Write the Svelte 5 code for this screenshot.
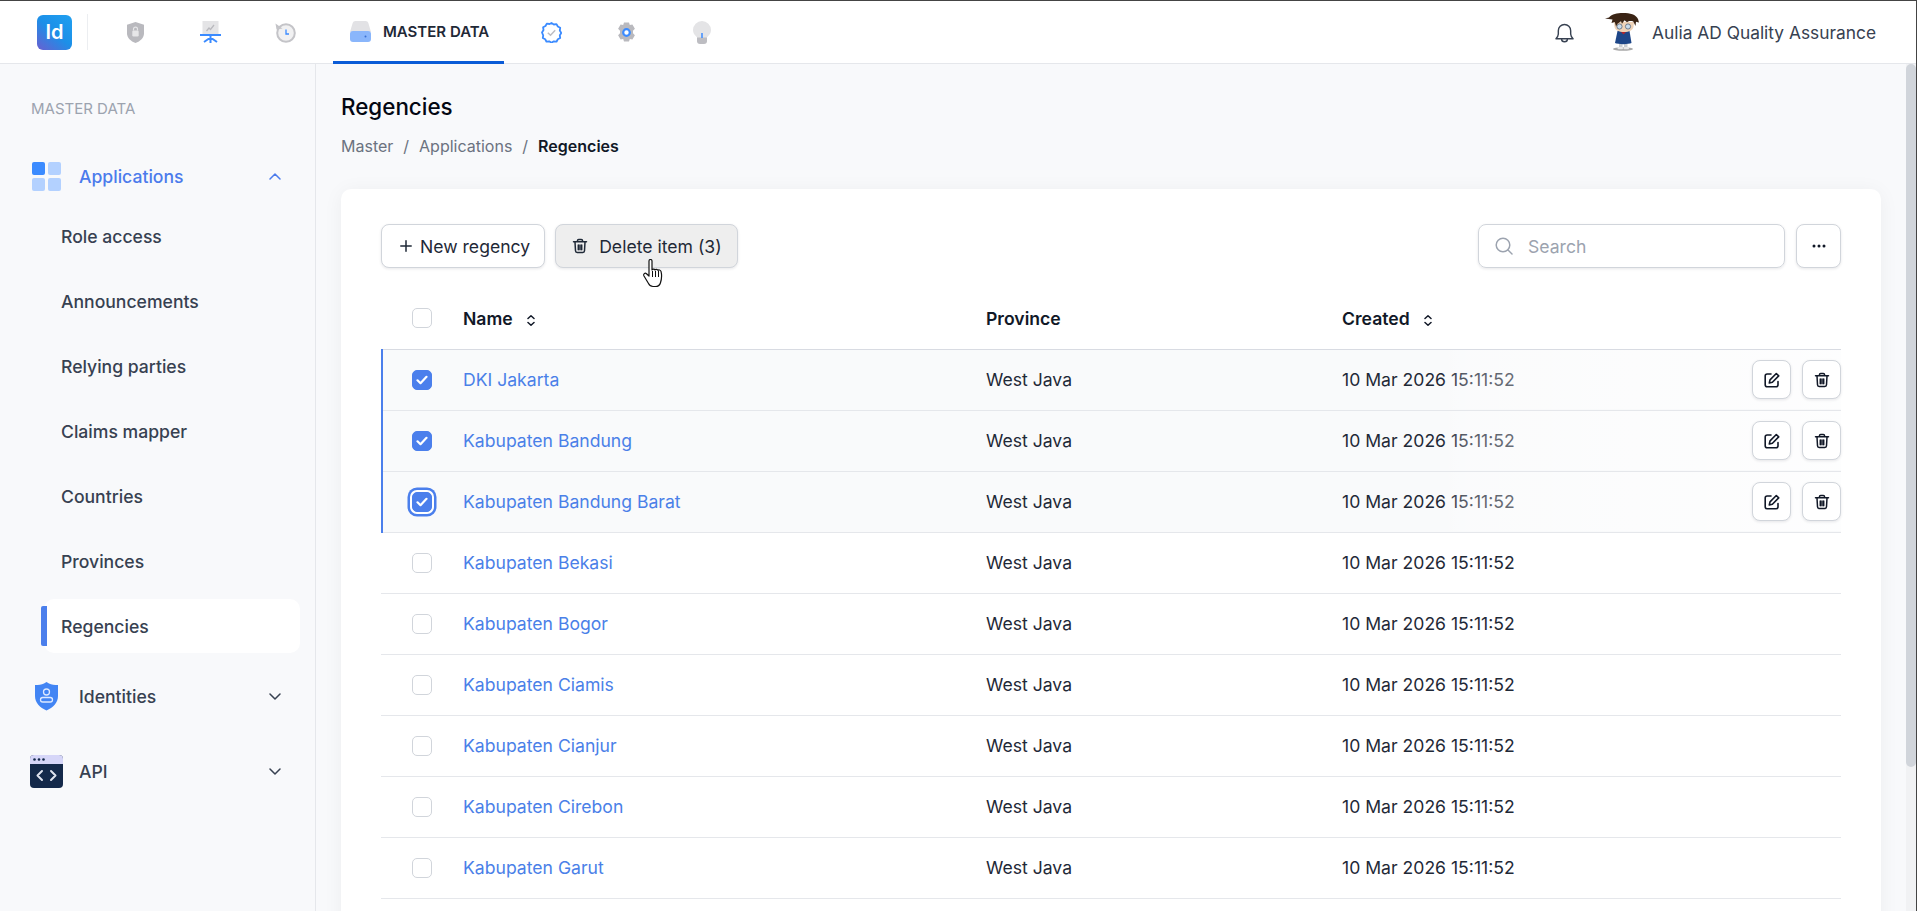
<script lang="ts">
  const subItems = ['Role access', 'Announcements', 'Relying parties', 'Claims mapper', 'Countries', 'Provinces', 'Regencies'];
  const regencies = [
    { name: 'DKI Jakarta', selected: true },
    { name: 'Kabupaten Bandung', selected: true },
    { name: 'Kabupaten Bandung Barat', selected: true, focus: true },
    { name: 'Kabupaten Bekasi' },
    { name: 'Kabupaten Bogor' },
    { name: 'Kabupaten Ciamis' },
    { name: 'Kabupaten Cianjur' },
    { name: 'Kabupaten Cirebon' },
    { name: 'Kabupaten Garut' }
  ];
</script>

{#snippet trash(size)}
  <svg width={size} height={size} viewBox="0 0 16 16" fill="none" stroke="currentColor" stroke-width="1.5" stroke-linecap="round" stroke-linejoin="round">
    <path d="M1.500 3.800h13M5.500 3.500V2.600c0-.7.5-1.200 1.200-1.200h2.600c.7 0 1.200.5 1.200 1.200v.9M3 4l.5 8.800c0 1 .7 1.700 1.700 1.700h5.600c1 0 1.700-.7 1.700-1.700L13 4M6.300 7v4.800M8 7v4.800M9.700 7v4.800" />
  </svg>
{/snippet}

{#snippet sortIcon()}
  <svg class="sort" width="8" height="11" viewBox="0 0 8 11" fill="none" stroke="currentColor" stroke-width="1.500" stroke-linecap="round" stroke-linejoin="round">
    <path d="M1 3.500l3-2.700 3 2.700M1 7.500l3 2.700 3-2.700" />
  </svg>
{/snippet}

{#snippet checkmark()}
  <svg width="12" height="10" viewBox="0 0 12 10" fill="none" stroke="#fff" stroke-width="2.200" stroke-linecap="round" stroke-linejoin="round">
    <path d="M1.500 5.300l3 2.900 6-6.400" />
  </svg>
{/snippet}

<div class="window">
  <header class="topbar">
    <div class="logo">Id</div>
    <span class="logo-divider"></span>
    <nav class="tabs">
      <a class="tab icon-only" href="#security" aria-label="Security">
        <svg width="17" height="21" viewBox="0 0 17 21">
          <path d="M8.500 0L17 2.800v8.400c0 4.600-3.700 8-8.500 9.800C3.700 19.200 0 15.800 0 11.200V2.800z" fill="#b9b9be" />
          <rect x="5.300" y="8.500" width="6.400" height="6" rx="1.200" fill="#e6e6e8" />
          <path d="M6.500 8.600V7.200a2 2 0 0 1 4 0v1.400" fill="none" stroke="#e6e6e8" stroke-width="1.200" />
        </svg>
      </a>
      <a class="tab icon-only" href="#report" aria-label="Reports">
        <svg width="21" height="22" viewBox="0 0 21 22">
          <rect x="2.500" y="0" width="16" height="13" fill="#e4e4e6" />
          <path d="M6.500 10l2.500-3 1.500 1.500L14 4" fill="none" stroke="#b9b9be" stroke-width="1.300" />
          <rect x="0" y="13" width="21" height="2" fill="#3b8bff" />
          <path d="M10.500 15v7M10.500 16.500L4 21M10.500 16.500L17 21" fill="none" stroke="#3b8bff" stroke-width="2" />
        </svg>
      </a>
      <a class="tab icon-only" href="#history" aria-label="History">
        <svg width="21" height="21" viewBox="0 0 21 21">
          <circle cx="11" cy="11" r="8.800" fill="#f1f1f2" stroke="#c4c4c8" stroke-width="2" />
          <path d="M0.500 1.500l1 6 6-1z" fill="#c4c4c8" />
          <path d="M11 7.500V12h3" fill="none" stroke="#3b8bff" stroke-width="1.300" />
        </svg>
      </a>
      <a class="tab active" href="#master">
        <svg width="21" height="21" viewBox="0 0 21 21">
          <path d="M0 11L2.500 2.500C3 .8 4 0 5.500 0h10c1.500 0 2.500.8 3 2.500L21 11z" fill="#e2e2e5" />
          <rect x="0" y="10" width="21" height="11" rx="3" fill="#8ab6fb" />
          <circle cx="15.500" cy="15.500" r="1" fill="#3b6fd0" />
        </svg>
        <span>MASTER DATA</span>
      </a>
      <a class="tab icon-only" href="#verified" aria-label="Verified">
        <svg width="21" height="21" viewBox="0 0 21 21">
          <path d="M10.500 1l2.300 1.500 2.700-.4 1.300 2.400 2.400 1.300-.4 2.700 1.500 2.500-1.500 2.300.4 2.700-2.400 1.300-1.300 2.400-2.700-.4-2.300 1.500-2.300-1.500-2.700.4-1.300-2.400-2.400-1.300.4-2.700L1 10.500l1.500-2.500-.4-2.700 2.400-1.300 1.300-2.400 2.700.4z" fill="none" stroke="#3b8bff" stroke-width="1.800" stroke-linejoin="round" />
          <path d="M6.800 10.800l2.700 2.500 4.700-5" fill="none" stroke="#bdbdc2" stroke-width="1.500" />
        </svg>
      </a>
      <a class="tab icon-only" href="#settings" aria-label="Settings">
        <svg width="21" height="21" viewBox="0 0 21 21">
          <path d="M8 .5h5l.8 2.600 2.600-.7 2.500 4.300-1.900 2 0 2.600 1.900 2-2.500 4.300-2.600-.7-.8 2.600H8l-.8-2.600-2.600.7-2.500-4.300 1.900-2 0-2.600-1.900-2 2.500-4.300 2.600.7z" fill="#b9b9be" />
          <circle cx="10.500" cy="10.500" r="3.300" fill="#fff" stroke="#3b8bff" stroke-width="2.200" />
        </svg>
      </a>
      <a class="tab icon-only" href="#ideas" aria-label="Ideas">
        <svg width="18" height="23" viewBox="0 0 18 23">
          <path d="M9 0a9 9 0 0 1 9 9c0 3-1.500 4.700-3 6.300L13.500 17h-9L3 15.300C1.500 13.700 0 12 0 9a9 9 0 0 1 9-9z" fill="#e4e4e6" />
          <path d="M4 16.500h10V20a3 3 0 0 1-3 3H7a3 3 0 0 1-3-3z" fill="#bdbdc2" />
          <path d="M9 12v5" stroke="#3b8bff" stroke-width="1.500" />
        </svg>
      </a>
    </nav>
    <div class="account">
      <svg class="bell" width="19" height="20" viewBox="0 0 20 21" fill="none" stroke="#374151" stroke-width="1.500" stroke-linecap="round" stroke-linejoin="round">
        <path d="M1 16.500c1.400-1.200 2.300-2.500 2.500-5V8a6.500 6.500 0 0 1 13 0v3.500c.2 2.500 1.100 3.800 2.500 5z" />
        <path d="M7 17c0 3.500 6 3.500 6 0" />
      </svg>
      <svg class="avatar" width="34" height="38" viewBox="0 0 34 38">
        <ellipse cx="18" cy="36" rx="10" ry="1.800" fill="#a9a9a9" />
        <rect x="14" y="30" width="3.500" height="5" fill="#c9cdd2" />
        <rect x="19" y="30" width="3.500" height="5" fill="#c9cdd2" />
        <rect x="12.500" y="34" width="5.500" height="2.200" rx="1" fill="#e8e8e8" />
        <rect x="18.500" y="34" width="5.500" height="2.200" rx="1" fill="#e8e8e8" />
        <path d="M12.500 18h12l2 12c-3 1.500-13.500 1.500-16.500 0z" fill="#1d4688" />
        <path d="M15.500 18.500h6l-3 3z" fill="#b0262a" />
        <path d="M9 9h20l-.5 5c-1 3.500-4 5-9.500 5s-8.500-1.500-9.500-5z" fill="#efd3b8" />
        <circle cx="14.500" cy="13.500" r="2.600" fill="#c9dcec" stroke="#56657a" stroke-width=".8" />
        <circle cx="23" cy="13.500" r="2.600" fill="#c9dcec" stroke="#56657a" stroke-width=".8" />
        <path d="M0 5.500l4-1C7 1 12 0 18 0c7 0 13 1.500 15 6l1 3.500-3-.8-.5 4.300-2.200-4.500c-2.300-.8-4.800-.4-6.300.8l-2.500-2-2.500 3.500-1-2.500-3.500 2.500-1.500 2.700-1.200-4.500-3.300 1 1-3.500z" fill="#3a2415" />
      </svg>
      <span class="user-name">Aulia AD Quality Assurance</span>
    </div>
  </header>

  <div class="body">
    <aside class="sidebar">
      <div class="side-title">MASTER DATA</div>

      <div class="group open">
        <svg class="apps-icon" width="29" height="29" viewBox="0 0 29 29">
          <rect width="13" height="13" rx="2" fill="#3b8bff" />
          <rect x="16" width="13" height="13" rx="2" fill="#b3d1ff" />
          <rect y="16" width="13" height="13" rx="2" fill="#b3d1ff" />
          <rect x="16" y="16" width="13" height="13" rx="2" fill="#b3d1ff" />
        </svg>
        <span class="group-label">Applications</span>
        <svg width="12" height="7" viewBox="0 0 12 7" fill="none" stroke="currentColor" stroke-width="1.500" stroke-linecap="round" stroke-linejoin="round"><path d="M1 6l5-5 5 5" /></svg>
      </div>
      <ul class="sub">
        {#each subItems as item}
          <li class:current={item === 'Regencies'}>{item}</li>
        {/each}
      </ul>

      <div class="group identities">
        <svg class="identity-icon" width="23" height="29" viewBox="0 0 23 29">
          <path d="M11.500 0L14 1.500c2.500 1 5.500 1.500 9 1.500v11c0 7-5 11.500-11.500 14.500C5 25.500 0 21 0 14V3c3.500 0 6.500-.5 9-1.500z" fill="#4285f4" />
          <circle cx="11.500" cy="10" r="3" fill="none" stroke="#dce9ff" stroke-width="1.300" />
          <rect x="5.500" y="15.500" width="12" height="4.500" rx="2.200" fill="none" stroke="#dce9ff" stroke-width="1.300" />
        </svg>
        <span class="group-label">Identities</span>
        <svg width="12" height="7" viewBox="0 0 12 7" fill="none" stroke="currentColor" stroke-width="1.500" stroke-linecap="round" stroke-linejoin="round"><path d="M1 1l5 5 5-5" /></svg>
      </div>

      <div class="group api">
        <svg width="33" height="33" viewBox="0 0 33 33">
          <rect width="33" height="33" rx="4" fill="#14294a" />
          <path d="M0 9V4a4 4 0 0 1 4-4h25a4 4 0 0 1 4 4v5z" fill="#d6d6f8" />
          <circle cx="4.500" cy="4.500" r="1.300" fill="#14294a" />
          <circle cx="9" cy="4.500" r="1.300" fill="#14294a" />
          <circle cx="13.500" cy="4.500" r="1.300" fill="#14294a" />
          <path d="M12 16l-4.500 4.500 4.500 4.500M21 16l4.500 4.500L21 25" fill="none" stroke="#dfe3ee" stroke-width="2" stroke-linecap="round" stroke-linejoin="round" />
        </svg>
        <span class="group-label">API</span>
        <svg width="12" height="7" viewBox="0 0 12 7" fill="none" stroke="currentColor" stroke-width="1.500" stroke-linecap="round" stroke-linejoin="round"><path d="M1 1l5 5 5-5" /></svg>
      </div>
    </aside>

    <main class="content">
      <h1>Regencies</h1>
      <div class="crumbs">
        <span>Master</span><i>/</i><span>Applications</span><i>/</i><b>Regencies</b>
      </div>

      <section class="card">
        <div class="toolbar">
          <button class="btn">
            <svg width="12" height="12" viewBox="0 0 12 12" fill="none" stroke="currentColor" stroke-width="1.500" stroke-linecap="round"><path d="M6 .8v10.400M.8 6h10.400" /></svg>
            New regency
          </button>
          <button class="btn hovered">
            {@render trash(16)}
            Delete item (3)
          </button>
          <div class="spacer"></div>
          <label class="search">
            <svg width="18" height="18" viewBox="0 0 18 18" fill="none" stroke="#9ca3af" stroke-width="1.500" stroke-linecap="round"><circle cx="8" cy="8" r="6.800" /><path d="M13 13l4 4" /></svg>
            <input placeholder="Search" />
          </label>
          <button class="btn more" aria-label="More">
            <svg width="14" height="4" viewBox="0 0 14 4" fill="#111827"><circle cx="2" cy="2" r="1.500" /><circle cx="7" cy="2" r="1.500" /><circle cx="12" cy="2" r="1.500" /></svg>
          </button>
        </div>

        <div class="thead">
          <span class="c-check"><span class="box"></span></span>
          <span>Name {@render sortIcon()}</span>
          <span>Province</span>
          <span>Created {@render sortIcon()}</span>
        </div>

        {#each regencies as row}
          <div class="row" class:selected={row.selected}>
            <span class="c-check">
              <span class="box" class:checked={row.selected} class:focus={row.focus}>
                {#if row.selected}{@render checkmark()}{/if}
              </span>
            </span>
            <a class="link" href="#regency">{row.name}</a>
            <span>West Java</span>
            <span>10 Mar 2026 15:11:52</span>
            {#if row.selected}
              <div class="actions">
                <button class="icon-btn" aria-label="Edit">
                  <svg width="16" height="16" viewBox="0 0 16 16" fill="none" stroke="currentColor" stroke-width="1.600" stroke-linecap="round" stroke-linejoin="round">
                    <path d="M7 2H3.200C2 2 1.200 2.800 1.200 4v8.800c0 1.200.8 2 2 2H12c1.200 0 2-.8 2-2V9.500" />
                    <path d="M12.300 1.500l2.400 2.400-6.300 6.400-3.100.7.700-3.100z" />
                  </svg>
                </button>
                <button class="icon-btn" aria-label="Delete">{@render trash(16)}</button>
              </div>
            {/if}
          </div>
        {/each}
      </section>
    </main>

    <div class="scroll-track"><div class="scroll-thumb"></div></div>
  </div>

  <svg class="cursor" width="22" height="30" viewBox="0 0 22 30">
    <path d="M6 2c0-2 3-2 3 0v9c.5-1.200 2.500-1.200 3 0 .5-1 2.500-1 3 .4.500-.8 2.500-.6 3 1 .8 3 .6 8-.6 11.600-.6 2-2.400 3.500-5 3.500H10c-2 0-3.500-1-4.500-3L1 17c-1-2 1-3.500 2.500-2.300L6 17z" fill="#fff" stroke="#111" stroke-width="1.200" stroke-linejoin="round" />
    <path d="M9.500 12v6M12.500 12v6M15.500 12v6" stroke="#111" stroke-width="1" />
  </svg>
</div>

<style>
  :global(body) {
    margin: 0;
    font-family: Inter, "Liberation Sans", sans-serif;
    overflow: hidden;
  }

  .window {
    position: relative;
    width: 1917px;
    height: 911px;
    display: flex;
    flex-direction: column;
    overflow: hidden;
    box-sizing: border-box;
    border-top: 1px solid #444;
    border-right: 1px solid #444;
    background: #f8f9fb;
    color: #111827;
    font-size: 17.6px;
  }

  .topbar {
    flex: none;
    height: 63px;
    box-sizing: border-box;
    display: flex;
    align-items: center;
    padding-left: 37px;
    background: #fff;
    border-bottom: 1px solid #e5e7eb;
  }

  .logo {
    width: 35px;
    height: 35px;
    display: flex;
    align-items: center;
    justify-content: center;
    border-radius: 6px;
    background: linear-gradient(40deg, #6a5fd0 0%, #1c8fe8 50%, #20a0f0 100%);
    color: #fff;
    font-weight: 600;
    font-size: 20px;
  }

  .logo-divider {
    width: 1px;
    height: 36px;
    margin-left: 15px;
    background: #eceef1;
  }

  .tabs {
    display: flex;
    align-items: stretch;
    height: 100%;
    margin-left: 10px;
  }

  .tab {
    display: flex;
    align-items: center;
    justify-content: center;
    text-decoration: none;
    color: #1f2937;
  }

  .icon-only { width: 75px; }

  .tab.active {
    width: 171px;
    box-sizing: border-box;
    gap: 12px;
    justify-content: flex-start;
    padding-left: 17px;
    margin: 0 10px -1px 10px;
    font-size: 15px;
    font-weight: 600;
    border-bottom: 3px solid #0b5cd7;
  }

  .account {
    margin-left: auto;
    display: flex;
    align-items: center;
    padding-right: 40px;
  }

  .bell { margin-right: 31px; margin-top: 2px; }
  .avatar { margin-right: 13px; }
  .user-name { color: #374151; font-size: 17.35px; }

  .body {
    flex: 1;
    min-height: 0;
    display: flex;
    position: relative;
  }

  .sidebar {
    flex: none;
    width: 316px;
    box-sizing: border-box;
    border-right: 1px solid #e5e7eb;
    padding: 36px 15px 0 30px;
  }

  .side-title {
    font-size: 15px;
    color: #9ca3af;
    line-height: 17px;
    margin-left: 1px;
  }

  .group {
    display: grid;
    grid-template-columns: 49px 1fr auto;
    align-items: center;
    height: 29px;
    margin: 45px 19px 0 0;
    color: #374151;
    font-weight: 500;
  }

  .group.open { color: #4b7bec; }
  .apps-icon { margin-left: 2px; }

  .sub {
    list-style: none;
    margin: 13px 0 0;
    padding: 0;
  }

  .sub li {
    height: 65px;
    display: flex;
    align-items: center;
    padding-left: 31px;
    color: #374151;
    font-weight: 500;
    position: relative;
    isolation: isolate;
    box-sizing: border-box;
  }

  .sub li.current::before {
    content: "";
    position: absolute;
    z-index: -1;
    left: 14px;
    right: 0;
    top: 5px;
    bottom: 6px;
    background: #fff;
    border-radius: 10px;
  }

  .sub li.current::after {
    content: "";
    position: absolute;
    left: 11px;
    top: 12px;
    width: 6px;
    height: 40px;
    background: #4b7fec;
    border-radius: 2px 0 0 2px;
  }

  .identities { margin-top: 23px; }
  .identity-icon { margin-left: 5px; }
  .api { margin-top: 44px; height: 33px; }

  .content {
    flex: 1;
    min-width: 0;
    padding: 28px 0 0 25px;
  }

  h1 {
    margin: 0;
    font-size: 22.4px;
    line-height: 30px;
    font-weight: 500;
    color: #030712;
  }

  .crumbs {
    margin-top: 14px;
    font-size: 16px;
    line-height: 20px;
    color: #6b7280;
    display: flex;
  }

  .crumbs i {
    font-style: normal;
    margin: 0 10px;
  }

  .crumbs b {
    font-weight: 600;
    color: #111827;
  }

  .card {
    width: 1540px;
    margin-top: 33px;
    box-sizing: border-box;
    padding: 35px 40px 40px;
    background: #fff;
    border-radius: 10px;
    box-shadow: 0 2px 20px rgba(17, 24, 39, 0.05);
  }

  .toolbar {
    display: flex;
    align-items: stretch;
    gap: 10px;
    height: 44px;
  }

  .spacer { flex: 1; }

  .btn, .icon-btn {
    display: inline-flex;
    align-items: center;
    justify-content: center;
    box-sizing: border-box;
    font: inherit;
    background: #fff;
    color: #1f2937;
    border: 1px solid #d1d5db;
    border-radius: 8px;
    box-shadow: 0 1px 3px rgba(17, 24, 39, 0.1);
  }

  .btn {
    gap: 8px;
    padding: 0 14px 0 18px;
  }

  .btn.hovered {
    background: #eeeeee;
    padding: 0 15px 0 16px;
    gap: 11px;
  }

  .more {
    width: 45px;
    margin-left: 1px;
    padding: 0;
  }

  .search {
    width: 307px;
    box-sizing: border-box;
    display: flex;
    align-items: center;
    gap: 15px;
    padding-left: 16px;
    border: 1px solid #d1d5db;
    border-radius: 8px;
    box-shadow: 0 1px 3px rgba(17, 24, 39, 0.1);
  }

  .search input {
    border: 0;
    outline: 0;
    padding: 0;
    flex: 1;
    min-width: 0;
    font: inherit;
    background: none;
  }

  .search input::placeholder { color: #9ca3af; }

  .thead, .row {
    display: grid;
    grid-template-columns: 82px 523px 356px 1fr;
    align-items: center;
    position: relative;
  }

  .thead {
    height: 82px;
    box-sizing: border-box;
    padding-top: 19px;
    font-weight: 600;
    color: #111827;
    border-bottom: 1px solid #d8dbe2;
  }

  .row {
    height: 61px;
    box-sizing: border-box;
    padding-bottom: 1px;
    border-bottom: 1px solid #e5e7eb;
    color: #1f2937;
  }

  .row.selected { background: #f9fafb; }

  .row.selected::before {
    content: "";
    position: absolute;
    left: 0;
    top: -1px;
    bottom: -1px;
    width: 2px;
    background: #4b7fec;
  }

  .c-check {
    display: flex;
    padding-left: 31px;
  }

  .box {
    width: 20px;
    height: 20px;
    box-sizing: border-box;
    border: 1px solid #d1d5db;
    border-radius: 5px;
    background: #fff;
    display: flex;
    align-items: center;
    justify-content: center;
  }

  .box.checked {
    background: #4b7fec;
    border-color: #4b7fec;
  }

  .box.focus {
    box-shadow: 0 0 0 2px #fff, 0 0 0 4.500px #4b7fec;
  }

  .sort {
    margin-left: 10px;
    vertical-align: -1px;
    color: #111827;
  }

  .link {
    color: #4a80e8;
    text-decoration: none;
  }

  .actions {
    position: absolute;
    right: 0;
    top: 0;
    bottom: 1px;
    width: 400px;
    display: flex;
    align-items: center;
    justify-content: flex-end;
    gap: 11px;
    background: linear-gradient(90deg, rgba(255, 255, 255, 0) 0%, rgba(255, 255, 255, 0.25) 6%, rgba(255, 255, 255, 0.5) 50%, rgba(255, 255, 255, 0.75) 100%);
  }

  .icon-btn {
    width: 39px;
    height: 39px;
    padding: 0;
    color: #111827;
  }

  .scroll-track {
    position: absolute;
    right: 0;
    top: 0;
    bottom: 0;
    width: 10px;
    background: #f1f2f4;
  }

  .scroll-thumb {
    height: 703px;
    border-radius: 5px;
    background: #d1d5db;
  }

  .cursor {
    position: absolute;
    left: 643px;
    top: 258px;
  }
</style>
